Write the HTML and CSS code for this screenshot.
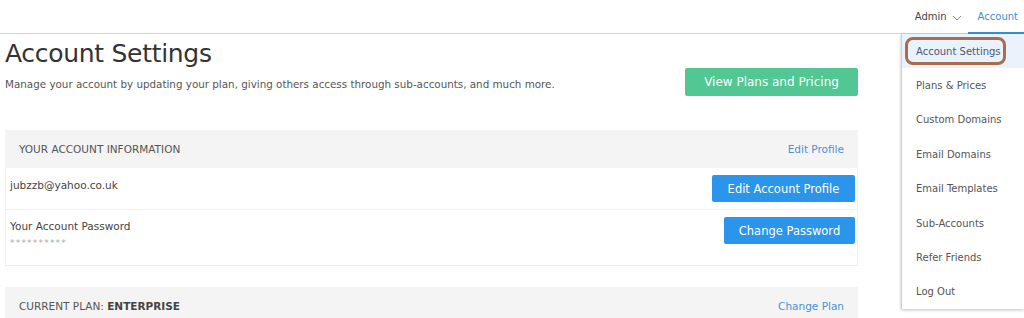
FILE: index.html
```html
<!DOCTYPE html>
<html>
<head>
<meta charset="utf-8">
<link rel="stylesheet" href="styles.css">
</head>
<body>
<header class="topbar">
  <div class="nav-admin">Admin <svg class="chev" width="10" height="6" viewBox="0 0 10 6"><path d="M1 1 L5 5 L9 1" fill="none" stroke="#888" stroke-width="1"/></svg></div>
  <div class="nav-account">Account</div>
</header>
<main class="page">
  <section class="content">
    <div class="intro">
      <div class="intro-text">
        <h1 class="title">Account Settings</h1>
        <p class="subtitle">Manage your account by updating your plan, giving others access through sub-accounts, and much more.</p>
      </div>
      <button class="btn btn-green">View Plans and Pricing</button>
    </div>
    <div class="card">
      <div class="card-head"><span class="card-title">YOUR ACCOUNT INFORMATION</span><a class="link">Edit Profile</a></div>
      <div class="card-body">
        <div class="row row-email">
          <div class="row-label">jubzzb@yahoo.co.uk</div>
          <button class="btn btn-blue btn-edit">Edit Account Profile</button>
        </div>
        <div class="row row-pass">
          <div class="row-text">
            <div class="row-label">Your Account Password</div>
            <div class="mask">**********</div>
          </div>
          <button class="btn btn-blue btn-pass">Change Password</button>
        </div>
      </div>
    </div>
    <div class="card card-plan">
      <div class="card-head"><span class="card-title">CURRENT PLAN: <b>ENTERPRISE</b></span><a class="link">Change Plan</a></div>
    </div>
  </section>
  <nav class="dropdown">
    <div class="dd-item active">Account Settings<span class="annot"></span></div>
    <div class="dd-item">Plans &amp; Prices</div>
    <div class="dd-item">Custom Domains</div>
    <div class="dd-item">Email Domains</div>
    <div class="dd-item">Email Templates</div>
    <div class="dd-item">Sub-Accounts</div>
    <div class="dd-item">Refer Friends</div>
    <div class="dd-item">Log Out</div>
  </nav>
</main>
</body>
</html>
```
FILE: styles.css
```css
* { box-sizing: border-box; }
html, body { margin: 0; padding: 0; background: #fff; }
body {
  width: 1024px;
  height: 318px;
  overflow: hidden;
  font-family: "DejaVu Sans", Verdana, sans-serif;
  color: #555;
  position: relative;
}
.topbar {
  height: 34px;
  border-bottom: 1px solid #d4d4d4;
  display: flex;
  justify-content: flex-end;
  align-items: stretch;
  font-size: 10px;
}
.nav-admin {
  display: flex;
  align-items: center;
  gap: 5px;
  color: #444;
  padding-right: 6px;
}
.chev { margin-top: 2px; }
.nav-account {
  display: flex;
  align-items: center;
  color: #3a8fd4;
  padding: 0 6px 0 10px;
  border-bottom: 2px solid #3a8fd4;
  margin-bottom: -1px;
}
.page { position: relative; }
.content {
  width: 858px;
  padding-left: 5px;
}
.intro {
  display: flex;
  justify-content: space-between;
  align-items: flex-start;
}
.title {
  margin: 5px 0 0 0;
  font-size: 25px;
  font-weight: normal;
  color: #333;
  line-height: 30px;
  letter-spacing: -0.3px;
}
.subtitle {
  margin: 9px 0 0 0;
  font-size: 10.35px;
  color: #555;
}
.btn {
  border: none;
  color: #fff;
  font-family: "DejaVu Sans", Verdana, sans-serif;
  border-radius: 2px;
  padding: 0;
}
.btn-green {
  margin-top: 34px;
  width: 173px;
  height: 28px;
  background: #52c693;
  font-size: 12px;
}
.card {
  margin-top: 34px;
}
.card-head {
  height: 38px;
  background: #f4f4f4;
  display: flex;
  justify-content: space-between;
  align-items: center;
  padding: 0 14px;
  font-size: 10.5px;
}
.card-title { color: #555; }
.card-title b { color: #444; }
.link { color: #4a92d2; }
.card-body {
  border-left: 1px solid #f0f0f0;
  border-right: 1px solid #f0f0f0;
  border-bottom: 1px solid #ececec;
}
.row {
  display: flex;
  justify-content: space-between;
  align-items: flex-start;
  padding: 0 2px 0 4px;
  font-size: 10.5px;
  color: #444;
}
.row-email {
  height: 42px;
  border-bottom: 1px solid #f0f0f0;
  padding-top: 10px;
}
.row-email .row-label { margin-top: 1px; }
.btn-edit {
  margin-top: -3px;
  width: 143px;
  height: 27px;
  background: #2a95ea;
  font-size: 11.5px;
}
.row-pass {
  height: 55px;
  padding-top: 10px;
}
.mask {
  margin-top: 6px;
  color: #aaa;
  font-size: 9px;
  letter-spacing: 1.2px;
}
.btn-pass {
  margin-top: -3px;
  width: 131px;
  height: 27px;
  background: #2a95ea;
  font-size: 11.5px;
}
.card-plan { margin-top: 21px; }
.dropdown {
  position: absolute;
  top: 0;
  right: 0;
  width: 123px;
  background: #fff;
  border-left: 1px solid #d0d0d0;
  box-shadow: 0 1px 3px rgba(0,0,0,0.25);
}
.dd-item {
  position: relative;
  height: 34.4px;
  display: flex;
  align-items: center;
  padding-left: 14px;
  font-size: 10px;
  color: #555;
}
.dd-item.active {
  background: #eaf2fb;
  color: #4a5a70;
}
.annot {
  position: absolute;
  left: 3px;
  top: 3px;
  width: 101px;
  height: 28px;
  border: 3px solid #a86c50;
  border-radius: 8px;
}
```
